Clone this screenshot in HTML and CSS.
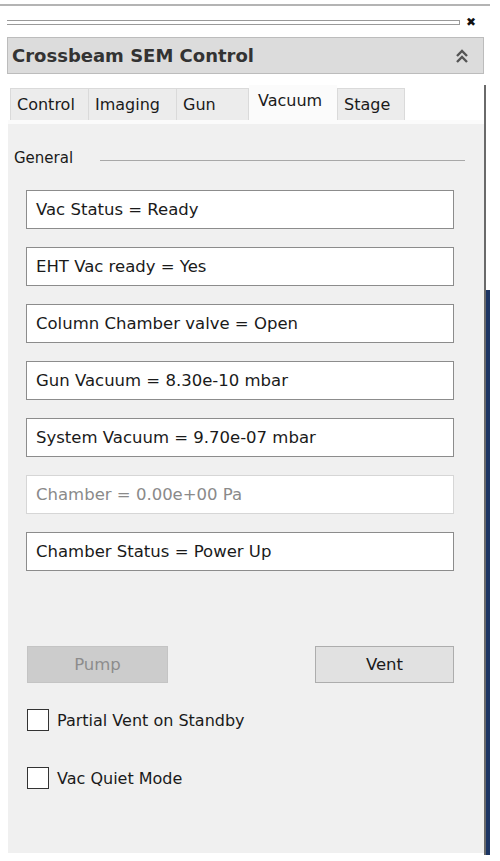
FILE: index.html
```html
<!DOCTYPE html>
<html lang="en">
<head>
  <meta charset="UTF-8">
  <title>Crossbeam SEM Control</title>
  <link rel="stylesheet" href="styles.css">
</head>
<body>
<div class="topline"></div>
<div class="gripper">
  <div class="grip-lines"></div>
  <span class="close">&#x2716;</span>
</div>
<div class="main">
  <div class="dock">
    <div class="title">
      <span>Crossbeam SEM Control</span>
      <svg class="collapse" width="14" height="16" viewBox="0 0 14 16">
        <path d="M2 8 L7 3 L12 8" fill="none" stroke="#555" stroke-width="2.4"/>
        <path d="M2 14 L7 9 L12 14" fill="none" stroke="#555" stroke-width="2.4"/>
      </svg>
    </div>
    <div class="tabs">
      <div class="tab">Control</div>
      <div class="tab">Imaging</div>
      <div class="tab">Gun</div>
      <div class="tab active">Vacuum</div>
      <div class="tab">Stage</div>
    </div>
    <div class="panel">
      <div class="group-head">
        <span>General</span>
        <div class="group-line"></div>
      </div>
      <div class="fields">
        <div class="field">Vac Status = Ready</div>
        <div class="field">EHT Vac ready = Yes</div>
        <div class="field">Column Chamber valve = Open</div>
        <div class="field">Gun Vacuum = 8.30e-10 mbar</div>
        <div class="field">System Vacuum = 9.70e-07 mbar</div>
        <div class="field disabled">Chamber = 0.00e+00 Pa</div>
        <div class="field">Chamber Status = Power Up</div>
      </div>
      <div class="buttons">
        <div class="btn disabled">Pump</div>
        <div class="btn">Vent</div>
      </div>
      <div class="check"><span class="box"></span>Partial Vent on Standby</div>
      <div class="check"><span class="box"></span>Vac Quiet Mode</div>
    </div>
  </div>
  <div class="edge"></div>
</div>
</body>
</html>
```

FILE: styles.css
```css
body{
  margin: 0;
  background: #fff;
  font-family: "DejaVu Sans", Verdana, sans-serif;
  color: #1a1a1a;
}
.topline{
  margin-top: 4px;
  width: 490px;
  height: 2px;
  background: #b4b4b4;
}
.gripper{
  display: flex;
  align-items: center;
  height: 30px;
  margin-top: 1px;
  padding-left: 7px;
}
.grip-lines{
  width: 452px;
  height: 3px;
  border-top: 1px solid #9a9a9a;
  border-bottom: 1px solid #9a9a9a;
  border-right: 1px solid #9a9a9a;
}
.close{
  margin-left: 6px;
  font-size: 12px;
  font-weight: bold;
  color: #111;
}
.main{
  display: flex;
}
.dock{
  margin-left: 7px;
  width: 477px;
}
.title{
  display: flex;
  align-items: center;
  justify-content: space-between;
  box-sizing: border-box;
  height: 37px;
  padding: 0 14px 0 4px;
  background: #dcdcdc;
  border: 1px solid #bcbcbc;
  font-size: 18px;
  font-weight: bold;
  color: #333;
}
.tabs{
  display: flex;
  align-items: flex-end;
  height: 35px;
  margin-top: 11px;
  padding-left: 3px;
}
.tab{
  box-sizing: border-box;
  height: 32px;
  padding: 0 6px;
  line-height: 31px;
  font-size: 16px;
  background: #ececec;
  border: 1px solid #dadada;
  border-bottom: none;
  margin-right: -1px;
}
.tab:nth-child(1){ width: 79px; }
.tab:nth-child(2){ width: 89px; }
.tab:nth-child(3){ width: 73px; }
.tab:nth-child(5){ width: 68px; }
.tab.active{
  width: 88px;
  height: 36px;
  line-height: 30px;
  margin: 0 0 -1px 1px;
  padding-left: 8px;
  background: #fbfbfb;
  border-color: #fbfbfb;
}
.panel{
  box-sizing: border-box;
  height: 733px;
  margin-left: 1px;
  padding: 0 30px 0 18px;
  background: #f0f0f0;
  border-top: 4px solid #fbfbfb;
}
.group-head{
  display: flex;
  align-items: center;
  margin-left: -12px;
  margin-right: -11px;
  padding-top: 25px;
  font-size: 15px;
}
.group-line{
  flex: 1;
  margin-left: 27px;
  margin-top: 4px;
  height: 1px;
  background: #a8a8a8;
}
.fields{
  display: flex;
  flex-direction: column;
  gap: 18px;
  margin-top: 23px;
}
.field{
  box-sizing: border-box;
  height: 39px;
  padding-left: 9px;
  line-height: 37px;
  font-size: 16.5px;
  background: #fff;
  border: 1px solid #8c8c8c;
}
.field.disabled{
  color: #8a8a8a;
  border-color: #d6d6d6;
}
.buttons{
  display: flex;
  justify-content: space-between;
  margin-top: 75px;
  padding-left: 1px;
}
.btn{
  box-sizing: border-box;
  width: 139px;
  height: 37px;
  line-height: 35px;
  text-align: center;
  font-size: 16.5px;
  background: #e1e1e1;
  border: 1px solid #adadad;
}
.btn.disabled{
  width: 141px;
  color: #8c8c8c;
  background: #cccccc;
  border-color: #c4c4c4;
}
.check{
  display: flex;
  align-items: center;
  gap: 8px;
  margin-top: 26px;
  padding-left: 1px;
  font-size: 16px;
}
.check + .check{
  margin-top: 36px;
}
.box{
  box-sizing: border-box;
  width: 22px;
  height: 22px;
  background: #fff;
  border: 1px solid #333;
}
.edge{
  width: 6px;
  height: 770px;
  margin-top: 48px;
  background: linear-gradient(to right, #6a6a6a 0 2px, transparent 2px),
              linear-gradient(to bottom, transparent 0 205px, #1c3563 205px);
}
```
